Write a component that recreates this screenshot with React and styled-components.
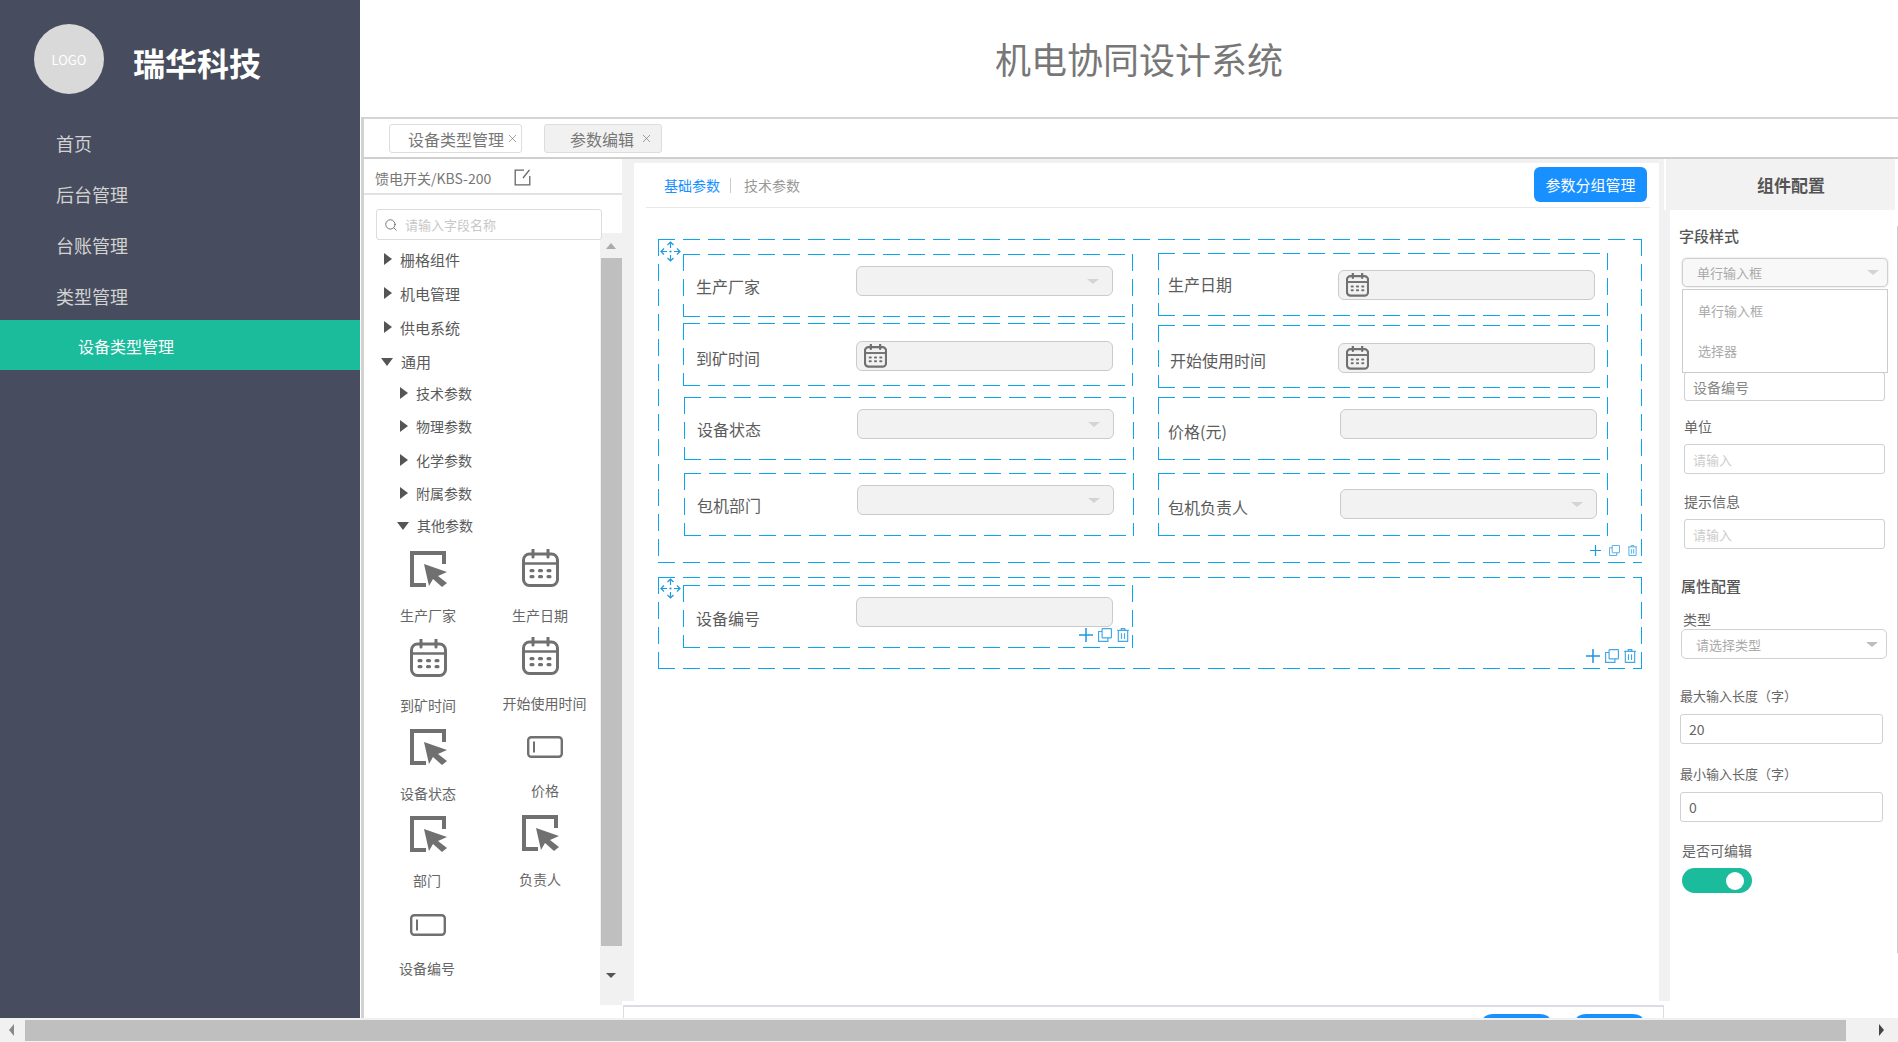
import React from 'react';
import styled, { createGlobalStyle, css } from 'styled-components';
import { Search, X } from 'lucide-react';

const BLUE = '#08a6ec';
const ICON_GREY = '#707070';

const GlobalStyle = createGlobalStyle`
  html, body {
    margin: 0;
    padding: 0;
    height: 100%;
    overflow: hidden;
    background: #fff;
  }
  * {
    box-sizing: border-box;
  }
  svg {
    flex: none;
  }
  body {
    font-family: "Noto Sans CJK SC", "Noto Sans", sans-serif;
    color: #555;
  }
`;

// long dashes like the design tool draws them, css dashed is too short
const longDash = css`
  background-image:
    repeating-linear-gradient(90deg, ${BLUE} 0 17px, transparent 17px 25px),
    repeating-linear-gradient(90deg, ${BLUE} 0 17px, transparent 17px 25px),
    repeating-linear-gradient(180deg, ${BLUE} 0 17px, transparent 17px 25px),
    repeating-linear-gradient(180deg, ${BLUE} 0 17px, transparent 17px 25px);
  background-size: 100% 1px, 100% 1px, 1px 100%, 1px 100%;
  background-position: top left, bottom left, top left, top right;
  background-repeat: no-repeat;
`;

const Page = styled.div`
  width: 1898px;
  height: 1042px;
  display: flex;
  flex-direction: column;
  overflow: hidden;
`;

const Body = styled.div`
  display: flex;
  height: 1018px;
`;

const Sidebar = styled.aside`
  width: 360px;
  flex: none;
  background: #474d5e;
  color: #d2d2d2;
`;

const Brand = styled.div`
  display: flex;
  gap: 29px;
  padding: 24px 0 0 34px;
`;

const LogoCircle = styled.div`
  width: 70px;
  height: 70px;
  border-radius: 50%;
  background: #d9d9d9;
  color: #fff;
  font-size: 13px;
  display: flex;
  align-items: center;
  justify-content: center;
`;

const BrandName = styled.div`
  font-size: 32px;
  font-weight: 700;
  color: #fff;
  line-height: 46px;
  margin-top: 15px;
`;

const Menu = styled.nav`
  margin-top: 24px;
`;

const MenuItem = styled.div`
  height: 51px;
  line-height: 50px;
  padding-left: 56px;
  font-size: 18px;
`;

const MenuItemActive = styled.div`
  height: 50px;
  line-height: 52px;
  margin-top: -2px;
  padding-left: 78px;
  font-size: 16px;
  color: #fff;
  background: #1abc9c;
`;

const Workspace = styled.div`
  flex: 1;
  min-width: 0;
  display: flex;
  flex-direction: column;
`;

const Header = styled.header`
  height: 117px;
  flex: none;
  display: flex;
  align-items: center;
  justify-content: center;
  font-size: 36px;
  color: #777;
  padding-bottom: 2px;
  margin-left: 20px;
`;

const Framed = styled.div`
  flex: 1;
  min-height: 0;
  display: flex;
  flex-direction: column;
  margin-left: 1px;
  border-left: 3px solid #d2d2d2;
`;

const TabBar = styled.div`
  height: 42px;
  flex: none;
  border-top: 2px solid #d4d4d4;
  border-bottom: 2px solid #cfcfcf;
  display: flex;
  gap: 22px;
  padding: 5px 0 0 25px;
`;

const Tab = styled.div`
  height: 29px;
  width: ${p => p.$width}px;
  padding-left: ${p => p.$pad}px;
  display: flex;
  align-items: center;
  gap: ${p => p.$gap}px;
  font-size: 16px;
  color: #777;
  border: 1px solid #ddd;
  border-radius: 3px;
  background: ${p => (p.$active ? '#fff' : '#f1f1f1')};
  svg {
    color: #777;
  }
`;

const Columns = styled.div`
  flex: 1;
  min-height: 0;
  display: flex;
`;

/* left palette */
const Palette = styled.div`
  width: 258px;
  flex: none;
  display: flex;
  flex-direction: column;
`;

const PaletteHead = styled.div`
  height: 36px;
  flex: none;
  display: flex;
  align-items: center;
  gap: 23px;
  padding: 3px 0 0 11px;
  font-size: 14px;
  color: #777;
  border-bottom: 2px solid #e2e2e2;
`;

const PaletteBody = styled.div`
  flex: 1;
  min-height: 0;
  display: flex;
`;

const TreeColumn = styled.div`
  width: 236px;
  flex: none;
  position: relative;
  z-index: 1;
`;

const SearchBox = styled.div`
  width: 226px;
  height: 31px;
  margin: 14px 0 0 12px;
  display: flex;
  align-items: center;
  gap: 7px;
  padding-left: 7px;
  border: 1px solid #dcdcdc;
  border-radius: 3px;
  background: #fff;
  font-size: 13px;
  color: #c8c8c8;
  svg {
    color: #666;
  }
`;

const Tree = styled.div`
  margin-top: 2px;
`;

const TreeRow = styled.div`
  height: ${p => p.$h}px;
  display: flex;
  align-items: center;
  padding-left: ${p => p.$indent}px;
  font-size: ${p => p.$size}px;
  color: #5a5a5a;
`;

const TriangleRight = styled.span`
  width: 0;
  height: 0;
  margin-right: 8px;
  border-style: solid;
  border-width: 6.5px 0 6.5px 8px;
  border-color: transparent transparent transparent #555;
`;

const TriangleDown = styled.span`
  width: 0;
  height: 0;
  margin: 1px 8px 0 -3px;
  border-style: solid;
  border-width: 8px 6px 0 6px;
  border-color: #555 transparent transparent transparent;
`;

const IconGrid = styled.div`
  display: grid;
  grid-template-columns: 112px 112px;
  grid-template-rows: 88px 92px 86px 99px 64px;
  margin-top: 10px;
  padding-left: 8px;
`;

const IconCell = styled.div`
  display: flex;
  flex-direction: column;
  align-items: center;
  padding-top: ${p => p.$top}px;
  margin-left: ${p => p.$shift}px;
`;

const IconLabel = styled.div`
  font-size: 14px;
  line-height: 20px;
  color: #666;
  white-space: nowrap;
  margin-top: ${p => p.$gap}px;
  margin-left: ${p => p.$shift}px;
`;

const VBar = styled.div`
  width: 22px;
  flex: none;
  height: 772px;
  margin-top: 38px;
  background: #f1f1f1;
  display: flex;
  flex-direction: column;
  align-items: center;
`;

const VBarCap = styled.div`
  height: ${p => p.$h}px;
  flex: none;
  display: flex;
  align-items: center;
  justify-content: center;
`;

const VBarThumb = styled.div`
  flex: 1;
  width: 21px;
  margin-left: 1px;
  background: #bfbfbf;
`;

const ArrowUp = styled.span`
  width: 0;
  height: 0;
  border-style: solid;
  border-width: 0 5.5px 6px 5.5px;
  border-color: transparent transparent ${p => p.$color} transparent;
`;

const ArrowDown = styled.span`
  width: 0;
  height: 0;
  border-style: solid;
  border-width: 5px 5.5px 0 5.5px;
  border-color: #555 transparent transparent transparent;
`;

/* middle editor */
const Center = styled.div`
  width: 1042px;
  flex: none;
  display: flex;
  flex-direction: column;
`;

const Stage = styled.div`
  height: 842px;
  flex: none;
  background: #f1f1f1;
  padding: 4px 5px 0 12px;
`;

const Card = styled.div`
  height: 838px;
  background: #fff;
`;

const CardHead = styled.div`
  height: 45px;
  margin: 0 9px 0 12px;
  padding: 4px 3px 0 18px;
  display: flex;
  justify-content: space-between;
  align-items: flex-start;
  border-bottom: 1px solid #e8e8e8;
`;

const SubTabs = styled.div`
  display: flex;
  align-items: center;
  height: 36px;
  font-size: 14px;
  color: #999;
`;

const SubTab = styled.span`
  color: ${p => (p.$active ? '#1890ff' : '#999')};
`;

const SubTabSep = styled.span`
  width: 1px;
  height: 15px;
  background: #ccc;
  margin: 0 13px 0 10px;
`;

const PrimaryButton = styled.div`
  width: 113px;
  height: 35px;
  border-radius: 6px;
  background: #1890ff;
  color: #fff;
  font-size: 15px;
  display: flex;
  align-items: center;
  justify-content: center;
`;

const Canvas = styled.div`
  padding: 31px 0 0 24px;
`;

const Group = styled.div`
  ${longDash}
  position: relative;
  width: 984px;
  height: ${p => p.$h}px;
  margin-top: ${p => p.$mt}px;
  padding-left: 25px;
  display: flex;
  gap: 24px;
`;

const GroupColumn = styled.div`
  width: 451px;
  flex: none;
`;

const Cell = styled.div`
  ${longDash}
  position: relative;
  width: 450px;
  height: 63px;
  margin-top: ${p => p.$mt}px;
  margin-left: ${p => p.$ml || 0}px;
  display: flex;
  align-items: flex-start;
`;

const CellLabel = styled.div`
  width: ${p => p.$width}px;
  flex: none;
  padding-left: ${p => p.$pad}px;
  margin-top: ${p => p.$top}px;
  font-size: 16px;
  line-height: 24px;
  color: #5c5c5c;
  white-space: nowrap;
`;

const Field = styled.div`
  width: 257px;
  height: 30px;
  flex: none;
  margin-top: ${p => p.$top}px;
  display: flex;
  align-items: center;
  justify-content: space-between;
  padding: 0 13px 0 7px;
  background: #f2f2f2;
  border: 1px solid #cbcbcb;
  border-radius: 6px;
`;

const Caret = styled.span`
  width: 0;
  height: 0;
  margin-left: auto;
  border-style: solid;
  border-width: 5px 6px 0 6px;
  border-color: ${p => p.$color || '#d4d4d4'} transparent transparent transparent;
`;

const Handle = styled.div`
  position: absolute;
  left: 2px;
  top: ${p => p.$top}px;
  line-height: 0;
  z-index: 2;
`;

const Actions = styled.div`
  position: absolute;
  right: ${p => p.$right}px;
  bottom: ${p => p.$bottom}px;
  display: flex;
  align-items: center;
  gap: ${p => p.$gap}px;
  line-height: 0;
`;

const Footer = styled.div`
  flex: 1;
  min-height: 0;
  overflow: hidden;
  margin: 4px 0 0 1px;
  border-top: 2px solid #dcdce4;
  border-left: 1px solid #ddd;
  border-right: 1px solid #ddd;
  padding: 7px 20px 0 0;
  display: flex;
  justify-content: flex-end;
  gap: 26px;
`;

const FooterButton = styled.div`
  width: 67px;
  height: 35px;
  flex: none;
  border-radius: 10px 10px 0 0 / 6px 6px 0 0;
  background: #1890ff;
`;

/* right config */
const Config = styled.div`
  flex: 1;
  min-width: 0;
  display: flex;
  flex-direction: column;
`;

const ConfigTitle = styled.div`
  height: 51px;
  flex: none;
  display: flex;
  align-items: center;
  justify-content: center;
  margin: 0 3px 0 2px;
  padding-left: 21px;
  font-size: 17px;
  font-weight: 700;
  color: #555;
  background: #f2f2f2;
`;

const ConfigBody = styled.div`
  height: 791px;
  flex: none;
  border-left: 6px solid #f1f1f1;
`;

const ConfigForm = styled.div`
  height: 727px;
  border-right: 1px solid #ccc;
`;

const SectionTitle = styled.div`
  font-size: 15px;
  font-weight: 500;
  line-height: 20px;
  color: #555;
  margin: ${p => p.$mt}px 0 0 ${p => p.$x}px;
`;

const FormLabel = styled.div`
  font-size: ${p => p.$size || 14}px;
  line-height: 20px;
  color: #666;
  white-space: nowrap;
  margin: ${p => p.$mt}px 0 0 ${p => p.$x}px;
`;

const TextBox = styled.div`
  width: ${p => p.$w}px;
  height: ${p => p.$h || 30}px;
  margin: ${p => p.$mt}px 0 0 ${p => p.$x}px;
  display: flex;
  align-items: center;
  padding: 0 8px;
  font-size: ${p => p.$size || 14}px;
  color: ${p => p.$color || '#ccc'};
  background: #fff;
  border: 1px solid #d0d0d0;
  border-radius: 3px;
`;

const SelectWrap = styled.div`
  position: relative;
  width: 206px;
  margin: ${p => p.$mt}px 0 0 ${p => p.$x}px;
`;

const SelectBox = styled.div`
  height: ${p => p.$h}px;
  display: flex;
  align-items: center;
  padding: 0 8px 0 14px;
  font-size: 13px;
  color: #aaa;
  background: ${p => p.$bg};
  border: 1px solid #d0d0d0;
  border-radius: 5px;
  box-shadow: ${p => (p.$open ? '0 0 2px rgba(0, 0, 0, 0.2)' : 'none')};
`;

const SelectMenu = styled.div`
  position: absolute;
  top: 31px;
  left: 0;
  width: 206px;
  height: 84px;
  z-index: 3;
  background: #fff;
  border: 1px solid #ccc;
  font-size: 13px;
  color: #aaa;
  padding-left: 15px;
`;

const SelectOption = styled.div`
  height: 40px;
  line-height: 40px;
  &:first-child {
    margin-top: 1px;
  }
`;

const Switch = styled.div`
  width: 70px;
  height: 25px;
  margin: 8px 0 0 12px;
  border-radius: 13px;
  background: #1abc9c;
  display: flex;
  align-items: center;
  justify-content: flex-end;
  padding-right: 8px;
`;

const SwitchKnob = styled.span`
  width: 18px;
  height: 18px;
  border-radius: 50%;
  background: #fff;
`;

/* bottom scrollbar */
const HBar = styled.div`
  height: 24px;
  flex: none;
  display: flex;
  align-items: center;
  background: #f1f1f1;
`;

const HBarCap = styled.div`
  width: ${p => p.$w}px;
  height: 100%;
  flex: none;
  display: flex;
  align-items: center;
  padding-left: ${p => p.$pad}px;
`;

const HBarThumb = styled.div`
  width: 1821px;
  height: 21px;
  flex: none;
  margin-top: 1px;
  background: #bfbfbf;
`;

const ArrowLeft = styled.span`
  width: 0;
  height: 0;
  border-style: solid;
  border-width: 6px 5px 6px 0;
  border-color: transparent #888 transparent transparent;
`;

const ArrowRight = styled.span`
  width: 0;
  height: 0;
  border-style: solid;
  border-width: 6px 0 6px 5px;
  border-color: transparent transparent transparent #444;
`;

const CursorIcon = () => (
  <svg width="37" height="36" viewBox="0 0 37 36">
    <path d="M16 34H2V2H34V13" fill="none" stroke={ICON_GREY} strokeWidth="4" />
    <polygon points="14,13 37,21 28,25 37,32 32,36 23,28 19,35" fill={ICON_GREY} />
  </svg>
);

const CalendarIcon = ({ size = 37, stroke = 3 }) => (
  <svg width={size} height={size * 38 / 37} viewBox="0 0 37 38">
    <rect x="1.5" y="5" width="34" height="31.5" rx="6" fill="none" stroke={ICON_GREY} strokeWidth={stroke} />
    <path d="M1.5 14.5H35.5" stroke={ICON_GREY} strokeWidth={stroke - 0.5} />
    <path d="M11 0.5V8M26 0.5V8" stroke={ICON_GREY} strokeWidth={stroke} strokeLinecap="round" />
    {[21.5, 27.5].map(y =>
      [10, 18.5, 27].map(x => (
        <rect key={`${x}-${y}`} x={x - 2.5} y={y - 1.5} width="5" height="3.2" rx="1.5" fill={ICON_GREY} />
      ))
    )}
  </svg>
);

const InputIcon = () => (
  <svg width="36" height="22" viewBox="0 0 36 22">
    <rect x="1.2" y="1.2" width="33.6" height="19.6" rx="3" fill="none" stroke={ICON_GREY} strokeWidth="2.4" />
    <path d="M7 5.5V16.5" stroke={ICON_GREY} strokeWidth="2" />
  </svg>
);

const EditIcon = () => (
  <svg width="17" height="17" viewBox="0 0 17 17" fill="none" stroke="#666" strokeWidth="1.3">
    <path d="M10 1.2H1.2V15.8H15.8V7" />
    <path d="M9 9L15.5 0.8" />
  </svg>
);

const MoveIcon = () => (
  <svg width="21" height="21" viewBox="0 0 21 21" fill="none" stroke="#1f98de" strokeWidth="1.2">
    <path d="M10.5 1V7M7.5 4L10.5 1L13.5 4" />
    <path d="M10.5 14V20M7.5 17L10.5 20L13.5 17" />
    <path d="M1 10.5H7M4 7.5L1 10.5L4 13.5" />
    <path d="M14 10.5H20M17 7.5L20 10.5L17 13.5" />
    <circle cx="10.5" cy="10.5" r="1.1" fill="#1f98de" stroke="none" />
  </svg>
);

const PlusIcon = ({ size }) => (
  <svg width={size} height={size} viewBox="0 0 12 12" fill="none" stroke="#1c98de" strokeWidth="1.3">
    <path d="M6 0V12M0 6H12" />
  </svg>
);

const CopyIcon = ({ size }) => (
  <svg width={size} height={size} viewBox="0 0 12 12" fill="none" stroke="#45a8e4" strokeWidth="1">
    <rect x="3.5" y="0.5" width="8" height="8" rx="0.5" />
    <path d="M3.5 3H0.5V11.5H8.5V8.5" />
  </svg>
);

const TrashIcon = ({ size }) => (
  <svg width={size - 2} height={size} viewBox="0 0 10 12" fill="none" stroke="#45a8e4" strokeWidth="1">
    <path d="M0 2H10M3.5 2V0.5H6.5V2" />
    <path d="M1 2V11.5H9V2" />
    <path d="M3.7 4.5V9.5M6.3 4.5V9.5" />
  </svg>
);

const RowActions = ({ size, gap, right, bottom }) => (
  <Actions $gap={gap} $right={right} $bottom={bottom}>
    <PlusIcon size={size} />
    <CopyIcon size={size} />
    <TrashIcon size={size} />
  </Actions>
);

const treeRows = [
  { text: '栅格组件', h: 34, indent: 20, size: 15 },
  { text: '机电管理', h: 34, indent: 20, size: 15 },
  { text: '供电系统', h: 34, indent: 20, size: 15 },
  { text: '通用', h: 34, indent: 20, size: 15, open: true },
  { text: '技术参数', h: 29, indent: 36, size: 14 },
  { text: '物理参数', h: 38, indent: 36, size: 14 },
  { text: '化学参数', h: 30, indent: 36, size: 14 },
  { text: '附属参数', h: 36, indent: 36, size: 14 },
  { text: '其他参数', h: 28, indent: 36, size: 14, open: true },
];

const paletteItems = [
  { icon: 'cursor', label: '生产厂家', top: 2 },
  { icon: 'calendar', label: '生产日期', top: 0 },
  { icon: 'calendar', label: '到矿时间', top: 2 },
  { icon: 'calendar', label: '开始使用时间', top: 0, labelShift: 9 },
  { icon: 'cursor', label: '设备状态', top: 0 },
  { icon: 'input', label: '价格', top: 7, shift: 10 },
  { icon: 'cursor', label: '部门', top: 1, labelShift: -2 },
  { icon: 'cursor', label: '负责人', top: 0 },
  { icon: 'input', label: '设备编号', top: 0, labelShift: -2 },
];

const leftCells = [
  { label: '生产厂家', kind: 'select', mt: 15, labelTop: 20, fieldTop: 12 },
  { label: '到矿时间', kind: 'date', mt: 6, labelTop: 23, fieldTop: 18 },
  { label: '设备状态', kind: 'select', mt: 11, ml: 1, labelTop: 20, fieldTop: 12 },
  { label: '包机部门', kind: 'select', mt: 13, ml: 1, labelTop: 20, fieldTop: 12 },
];

const rightCells = [
  { label: '生产日期', kind: 'date', mt: 14, labelTop: 19, fieldTop: 17, pad: 10, width: 180 },
  { label: '开始使用时间', kind: 'date', mt: 9, labelTop: 23, fieldTop: 18, pad: 12, width: 180 },
  { label: '价格(元)', kind: 'text', mt: 9, labelTop: 22, fieldTop: 12, pad: 10, width: 182 },
  { label: '包机负责人', kind: 'select', mt: 13, labelTop: 22, fieldTop: 16, pad: 10, width: 182 },
];

const paletteIcon = kind => {
  if (kind === 'cursor') return <CursorIcon />;
  if (kind === 'calendar') return <CalendarIcon />;
  return <InputIcon />;
};

const FormCell = ({ cell, children }) => (
  <Cell $mt={cell.mt} $ml={cell.ml}>
    <CellLabel $width={cell.width || 173} $pad={cell.pad || 13} $top={cell.labelTop}>
      {cell.label}
    </CellLabel>
    <Field $top={cell.fieldTop}>
      {cell.kind === 'date' && <CalendarIcon size={23} stroke={3.6} />}
      {cell.kind === 'select' && <Caret />}
    </Field>
    {children}
  </Cell>
);

const App = () => (
  <Page>
    <GlobalStyle />
    <Body>
      <Sidebar>
        <Brand>
          <LogoCircle>LOGO</LogoCircle>
          <BrandName>瑞华科技</BrandName>
        </Brand>
        <Menu>
          <MenuItem>首页</MenuItem>
          <MenuItem>后台管理</MenuItem>
          <MenuItem>台账管理</MenuItem>
          <MenuItem>类型管理</MenuItem>
          <MenuItemActive>设备类型管理</MenuItemActive>
        </Menu>
      </Sidebar>

      <Workspace>
        <Header>机电协同设计系统</Header>
        <Framed>
          <TabBar>
            <Tab $active $width={133} $pad={18} $gap={2}>
              设备类型管理
              <X size={13} strokeWidth={1.3} />
            </Tab>
            <Tab $width={118} $pad={25} $gap={6}>
              参数编辑
              <X size={13} strokeWidth={1.3} />
            </Tab>
          </TabBar>

          <Columns>
            <Palette>
              <PaletteHead>
                馈电开关/KBS-200
                <EditIcon />
              </PaletteHead>
              <PaletteBody>
                <TreeColumn>
                  <SearchBox>
                    <Search size={14} strokeWidth={1.5} />
                    请输入字段名称
                  </SearchBox>
                  <Tree>
                    {treeRows.map(row => (
                      <TreeRow key={row.text} $h={row.h} $indent={row.indent} $size={row.size}>
                        {row.open ? <TriangleDown /> : <TriangleRight />}
                        {row.text}
                      </TreeRow>
                    ))}
                  </Tree>
                  <IconGrid>
                    {paletteItems.map(item => (
                      <IconCell key={item.label} $top={item.top} $shift={item.shift || 0}>
                        {paletteIcon(item.icon)}
                        <IconLabel $gap={item.icon === 'input' ? 22 : 18} $shift={item.labelShift || 0}>
                          {item.label}
                        </IconLabel>
                      </IconCell>
                    ))}
                  </IconGrid>
                </TreeColumn>
                <VBar>
                  <VBarCap $h={25}>
                    <ArrowUp $color="#aaa" />
                  </VBarCap>
                  <VBarThumb />
                  <VBarCap $h={59}>
                    <ArrowDown />
                  </VBarCap>
                </VBar>
              </PaletteBody>
            </Palette>

            <Center>
              <Stage>
                <Card>
                  <CardHead>
                    <SubTabs>
                      <SubTab $active>基础参数</SubTab>
                      <SubTabSep />
                      <SubTab>技术参数</SubTab>
                    </SubTabs>
                    <PrimaryButton>参数分组管理</PrimaryButton>
                  </CardHead>
                  <Canvas>
                    <Group $h={324} $mt={0}>
                      <Handle $top={2}>
                        <MoveIcon />
                      </Handle>
                      <GroupColumn>
                        {leftCells.map(cell => (
                          <FormCell key={cell.label} cell={cell} />
                        ))}
                      </GroupColumn>
                      <GroupColumn>
                        {rightCells.map(cell => (
                          <FormCell key={cell.label} cell={cell} />
                        ))}
                      </GroupColumn>
                      <RowActions size={11} gap={8} right={5} bottom={7} />
                    </Group>
                    <Group $h={92} $mt={14}>
                      <Handle $top={1}>
                        <MoveIcon />
                      </Handle>
                      <GroupColumn>
                        <FormCell cell={{ label: '设备编号', kind: 'text', mt: 8, labelTop: 21, fieldTop: 12 }}>
                          <RowActions size={14} gap={5} right={4} bottom={6} />
                        </FormCell>
                      </GroupColumn>
                      <RowActions size={14} gap={5} right={6} bottom={6} />
                    </Group>
                  </Canvas>
                </Card>
              </Stage>
              <Footer>
                <FooterButton />
                <FooterButton />
              </Footer>
            </Center>

            <Config>
              <ConfigTitle>组件配置</ConfigTitle>
              <ConfigBody>
                <ConfigForm>
                  <SectionTitle $mt={16} $x={9}>字段样式</SectionTitle>
                  <SelectWrap $mt={12} $x={12}>
                    <SelectBox $h={29} $bg="#f8f8f8" $open>
                      单行输入框
                      <Caret />
                    </SelectBox>
                    <SelectMenu>
                      <SelectOption>单行输入框</SelectOption>
                      <SelectOption>选择器</SelectOption>
                    </SelectMenu>
                  </SelectWrap>
                  <TextBox $w={201} $h={29} $mt={85} $x={14} $color="#888">设备编号</TextBox>
                  <FormLabel $mt={15} $x={14}>单位</FormLabel>
                  <TextBox $w={201} $h={30} $mt={8} $x={14} $size={13}>请输入</TextBox>
                  <FormLabel $mt={17} $x={14}>提示信息</FormLabel>
                  <TextBox $w={201} $h={30} $mt={8} $x={14} $size={13}>请输入</TextBox>
                  <SectionTitle $mt={27} $x={11}>属性配置</SectionTitle>
                  <FormLabel $mt={13} $x={13}>类型</FormLabel>
                  <SelectWrap $mt={0} $x={11}>
                    <SelectBox $h={30} $bg="#fff">
                      请选择类型
                      <Caret $color="#bdbdbd" />
                    </SelectBox>
                  </SelectWrap>
                  <FormLabel $mt={27} $x={10} $size={13}>最大输入长度（字）</FormLabel>
                  <TextBox $w={203} $mt={8} $x={10} $color="#666">20</TextBox>
                  <FormLabel $mt={20} $x={10} $size={13}>最小输入长度（字）</FormLabel>
                  <TextBox $w={203} $mt={8} $x={10} $color="#666">0</TextBox>
                  <FormLabel $mt={18} $x={12}>是否可编辑</FormLabel>
                  <Switch>
                    <SwitchKnob />
                  </Switch>
                </ConfigForm>
              </ConfigBody>
            </Config>
          </Columns>
        </Framed>
      </Workspace>
    </Body>
    <HBar>
      <HBarCap $w={25} $pad={9}>
        <ArrowLeft />
      </HBarCap>
      <HBarThumb />
      <HBarCap $w={52} $pad={33}>
        <ArrowRight />
      </HBarCap>
    </HBar>
  </Page>
);

export default App;
